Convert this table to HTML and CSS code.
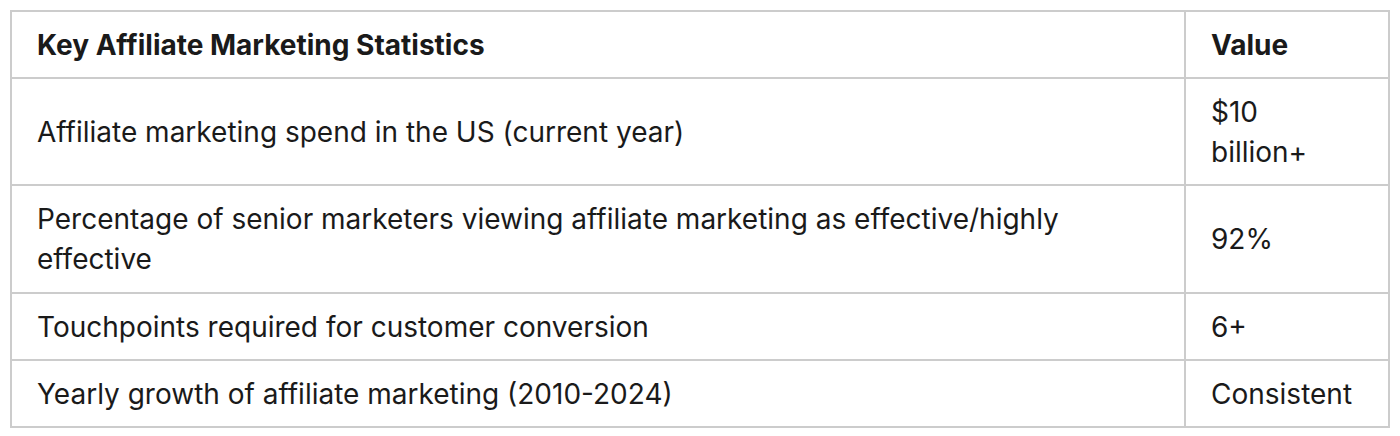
FILE: index.html
```html
<!DOCTYPE html>
<html lang="en">
<head>
<meta charset="utf-8">
<title>Key Affiliate Marketing Statistics</title>
<link rel="stylesheet" href="styles.css">
</head>
<body>
<div class="wrap">
<table class="stats">
  <thead>
    <tr><th class="col-stat">Key Affiliate Marketing Statistics</th><th class="col-val">Value</th></tr>
  </thead>
  <tbody>
    <tr><td>Affiliate marketing spend in the US (current year)</td><td class="val">$10 billion+</td></tr>
    <tr><td>Percentage of senior marketers viewing affiliate marketing as effective/highly effective</td><td class="val">92%</td></tr>
    <tr><td>Touchpoints required for customer conversion</td><td class="val">6+</td></tr>
    <tr><td>Yearly growth of affiliate marketing (2010-2024)</td><td class="val">Consistent</td></tr>
  </tbody>
</table>
</div>
</body>
</html>
```
FILE: styles.css
```css
html, body {
  margin: 0;
  padding: 0;
  background: #ffffff;
}
.wrap {
  padding: 10px 10px 0 10px;
}
.stats {
  width: 1380px;
  border-collapse: collapse;
  table-layout: fixed;
  font-family: Inter, "Noto Sans", sans-serif;
  font-size: 28px;
  line-height: 40px;
  color: #1a1a1a;
}
.stats th,
.stats td {
  border: 2px solid #cccccc;
  padding: 13px 25px 12.2px 25px;
  text-align: left;
  vertical-align: middle;
}
.stats th {
  font-weight: 700;
}
.col-stat {
  width: auto;
}
.stats .col-val,
.stats .val {
  padding-right: 33px;
}
.col-val {
  width: 144px;
}
```
